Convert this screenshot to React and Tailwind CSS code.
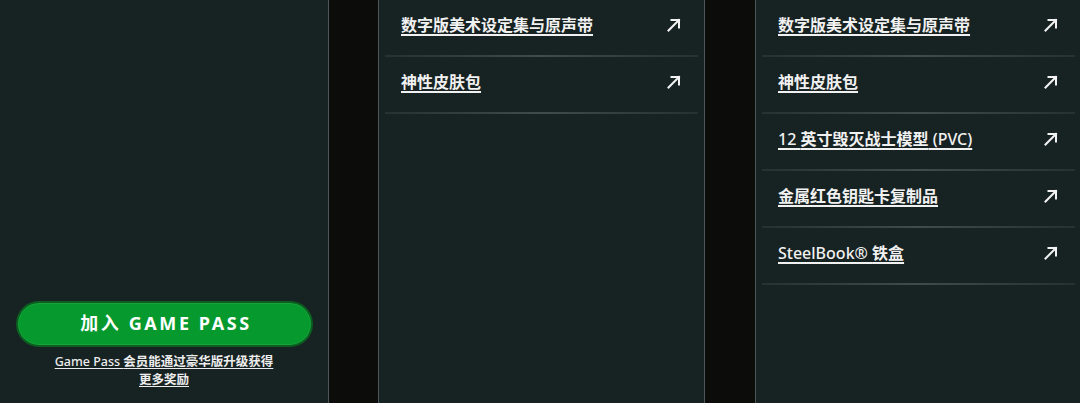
import React from "react";

const font = { fontFamily: '"Noto Sans", "Noto Sans CJK SC", sans-serif' };

function Arrow() {
  return (
    <svg width="14" height="14" viewBox="0 0 14 14" fill="none" className="shrink-0">
      <path d="M1.5 12.5 L12 2" stroke="#f2f2f2" strokeWidth="2" strokeLinecap="square" />
      <path d="M4.5 2 H12 V9.5" stroke="#f2f2f2" strokeWidth="2" strokeLinecap="square" />
    </svg>
  );
}

function Mixed({ text }) {
  const parts = text.split(/([A-Za-z0-9®() .]+)/).filter((p) => p.length);
  return parts.map((p, i) =>
    /^[A-Za-z0-9®() .]+$/.test(p) ? (
      <span key={i} className="font-medium">
        {p}
      </span>
    ) : (
      <span key={i}>{p}</span>
    )
  );
}

function Row({ label }) {
  return (
    <div>
      <div className="h-[55px] flex items-center justify-between pl-[22px] pr-[23px] pb-[5px]">
        <a className="text-[16px] font-bold text-[#f1f1f1] underline underline-offset-[3px] decoration-[1.5px] leading-none">
          <Mixed text={label} />
        </a>
        <Arrow />
      </div>
      <div className="mx-[6px] h-[2px] bg-gradient-to-r from-[#263131] via-[#404c4c] to-[#263131]" />
    </div>
  );
}

export default function App() {
  const items2 = ["数字版美术设定集与原声带", "神性皮肤包"];
  const items3 = [
    "数字版美术设定集与原声带",
    "神性皮肤包",
    "12 英寸毁灭战士模型 (PVC)",
    "金属红色钥匙卡复制品",
    "SteelBook® 铁盒",
  ];
  return (
    <div className="w-[1080px] h-[403px] overflow-hidden bg-[#0c0c0a] flex" style={font}>
      <div className="w-[330px] ml-[-1px] shrink-0 h-full bg-[#172222] border-x border-[#4b5656] flex flex-col justify-end items-center pb-[14px] px-[16px]">
        <button className="w-[297px] h-[46px] rounded-full bg-[#05992e] border-2 border-[#0b5e20] ring-1 ring-inset ring-[#1aa33d] flex items-center justify-center text-white text-[18px] font-bold tracking-[2.6px] pb-[1px] pl-[4px]">
          加入 GAME PASS
        </button>
        <div className="mt-[6px] text-center text-[12.5px] font-semibold text-[#ededed] leading-[18px] underline underline-offset-2">
          <span className="font-medium">Game Pass </span>会员能通过豪华版升级获得
          <br />
          更多奖励
        </div>
      </div>
      <div className="w-[327px] ml-[49px] shrink-0 h-full bg-[#172222] border-x border-[#4b5656]">
        {items2.map((l) => (
          <Row key={l} label={l} />
        ))}
      </div>
      <div className="w-[327px] ml-[50px] shrink-0 h-full bg-[#172222] border-x border-[#4b5656]">
        {items3.map((l) => (
          <Row key={l} label={l} />
        ))}
      </div>
    </div>
  );
}
